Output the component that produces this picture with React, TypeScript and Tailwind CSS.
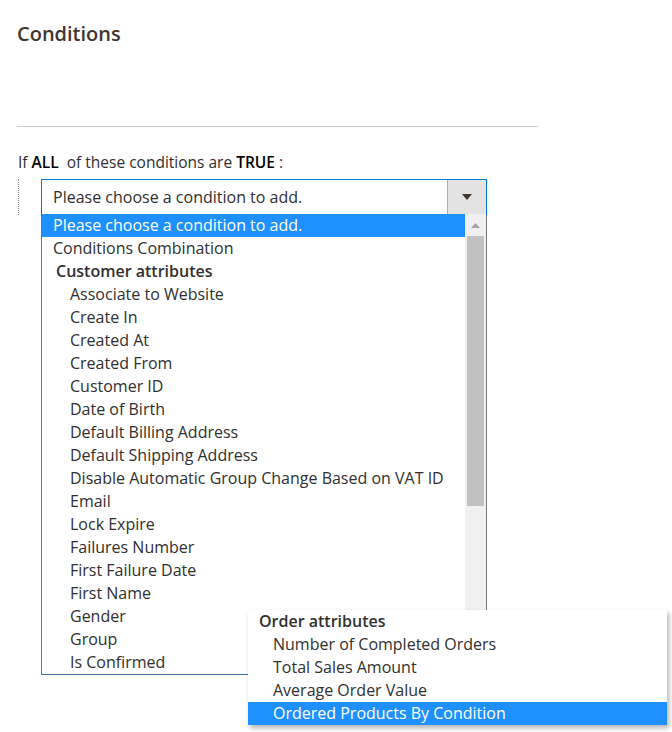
import React from "react";

type Opt = { label: string; kind: "top" | "group" | "item"; active?: boolean };

const mainOptions: Opt[] = [
  { label: "Please choose a condition to add.", kind: "top", active: true },
  { label: "Conditions Combination", kind: "top" },
  { label: "Customer attributes", kind: "group" },
  { label: "Associate to Website", kind: "item" },
  { label: "Create In", kind: "item" },
  { label: "Created At", kind: "item" },
  { label: "Created From", kind: "item" },
  { label: "Customer ID", kind: "item" },
  { label: "Date of Birth", kind: "item" },
  { label: "Default Billing Address", kind: "item" },
  { label: "Default Shipping Address", kind: "item" },
  { label: "Disable Automatic Group Change Based on VAT ID", kind: "item" },
  { label: "Email", kind: "item" },
  { label: "Lock Expire", kind: "item" },
  { label: "Failures Number", kind: "item" },
  { label: "First Failure Date", kind: "item" },
  { label: "First Name", kind: "item" },
  { label: "Gender", kind: "item" },
  { label: "Group", kind: "item" },
  { label: "Is Confirmed", kind: "item" },
];

const orderOptions: Opt[] = [
  { label: "Order attributes", kind: "group" },
  { label: "Number of Completed Orders", kind: "item" },
  { label: "Total Sales Amount", kind: "item" },
  { label: "Average Order Value", kind: "item" },
  { label: "Ordered Products By Condition", kind: "item", active: true },
];

function OptionRow({ opt, groupPad, itemPad }: { opt: Opt; groupPad: string; itemPad: string }) {
  const pad = opt.kind === "top" ? "pl-[11px]" : opt.kind === "group" ? groupPad : itemPad;
  return (
    <div
      className={`h-[23px] leading-[23px] text-[16px] whitespace-nowrap ${pad} ${
        opt.kind === "group" ? "font-semibold" : ""
      } ${opt.active ? "bg-[#1e90ff] text-white" : "text-[#303030]"}`}
    >
      {opt.label}
    </div>
  );
}

export default function App() {
  return (
    <div className="relative w-[672px] h-[732px] bg-white font-['Open_Sans',sans-serif] text-[#303030]">
      {/* Section title */}
      <div className="h-[126px] pl-[17px] pt-[21px]">
        <h2 className="text-[20px] leading-[26px] font-semibold text-[#41362f]">Conditions</h2>
      </div>
      <div className="ml-[17px] w-[521px] h-px bg-[#cccccc]" />

      {/* Rule line */}
      <p className="mt-[25px] pl-[18px] text-[15.5px] leading-[20px]">
        If <b className="font-semibold text-black">ALL</b>&nbsp; of these conditions are{" "}
        <b className="font-semibold text-black">TRUE</b> :
      </p>

      <div className="mt-[7px] flex pl-[18px]">
        <div className="w-px h-[36px] border-l border-dotted border-[#8a8a8a]" />
        <div className="ml-[22px] w-[446px] h-[36px] flex border border-[#007bdb] bg-white">
          <div className="flex-1 pl-[11px] text-[16px] leading-[34px] whitespace-nowrap">
            Please choose a condition to add.
          </div>
          <div className="w-[39px] flex items-center justify-center bg-[#e3e3e3] border-l border-[#adadad]">
            <svg width="10" height="6" viewBox="0 0 10 6">
              <path d="M0 0h10L5 6z" fill="#41362f" />
            </svg>
          </div>
        </div>
      </div>

      {/* Native dropdown list */}
      <div className="ml-[41px] w-[446px] flex border-x border-[#767676] border-b border-b-[#3f6f9f] -mt-px">
        <div className="flex-1">
          {mainOptions.map((o) => (
            <OptionRow key={o.label} opt={o} groupPad="pl-[14px]" itemPad="pl-[28px]" />
          ))}
        </div>
        <div className="w-[21px] bg-[#f0f0f0] flex flex-col items-center">
          <div className="h-[22px] flex items-center justify-center">
            <svg width="9" height="5" viewBox="0 0 9 5">
              <path d="M4.5 0L9 5H0z" fill="#a3a3a3" />
            </svg>
          </div>
          <div className="w-[17px] h-[270px] bg-[#c1c1c1]" />
        </div>
      </div>

      {/* Sub-menu popup */}
      <div className="absolute left-[248px] top-[610px] w-[419px] bg-white shadow-[2px_3px_5px_rgba(0,0,0,0.3)]">
        {orderOptions.map((o) => (
          <OptionRow key={o.label} opt={o} groupPad="pl-[11px]" itemPad="pl-[25px]" />
        ))}
      </div>
    </div>
  );
}
